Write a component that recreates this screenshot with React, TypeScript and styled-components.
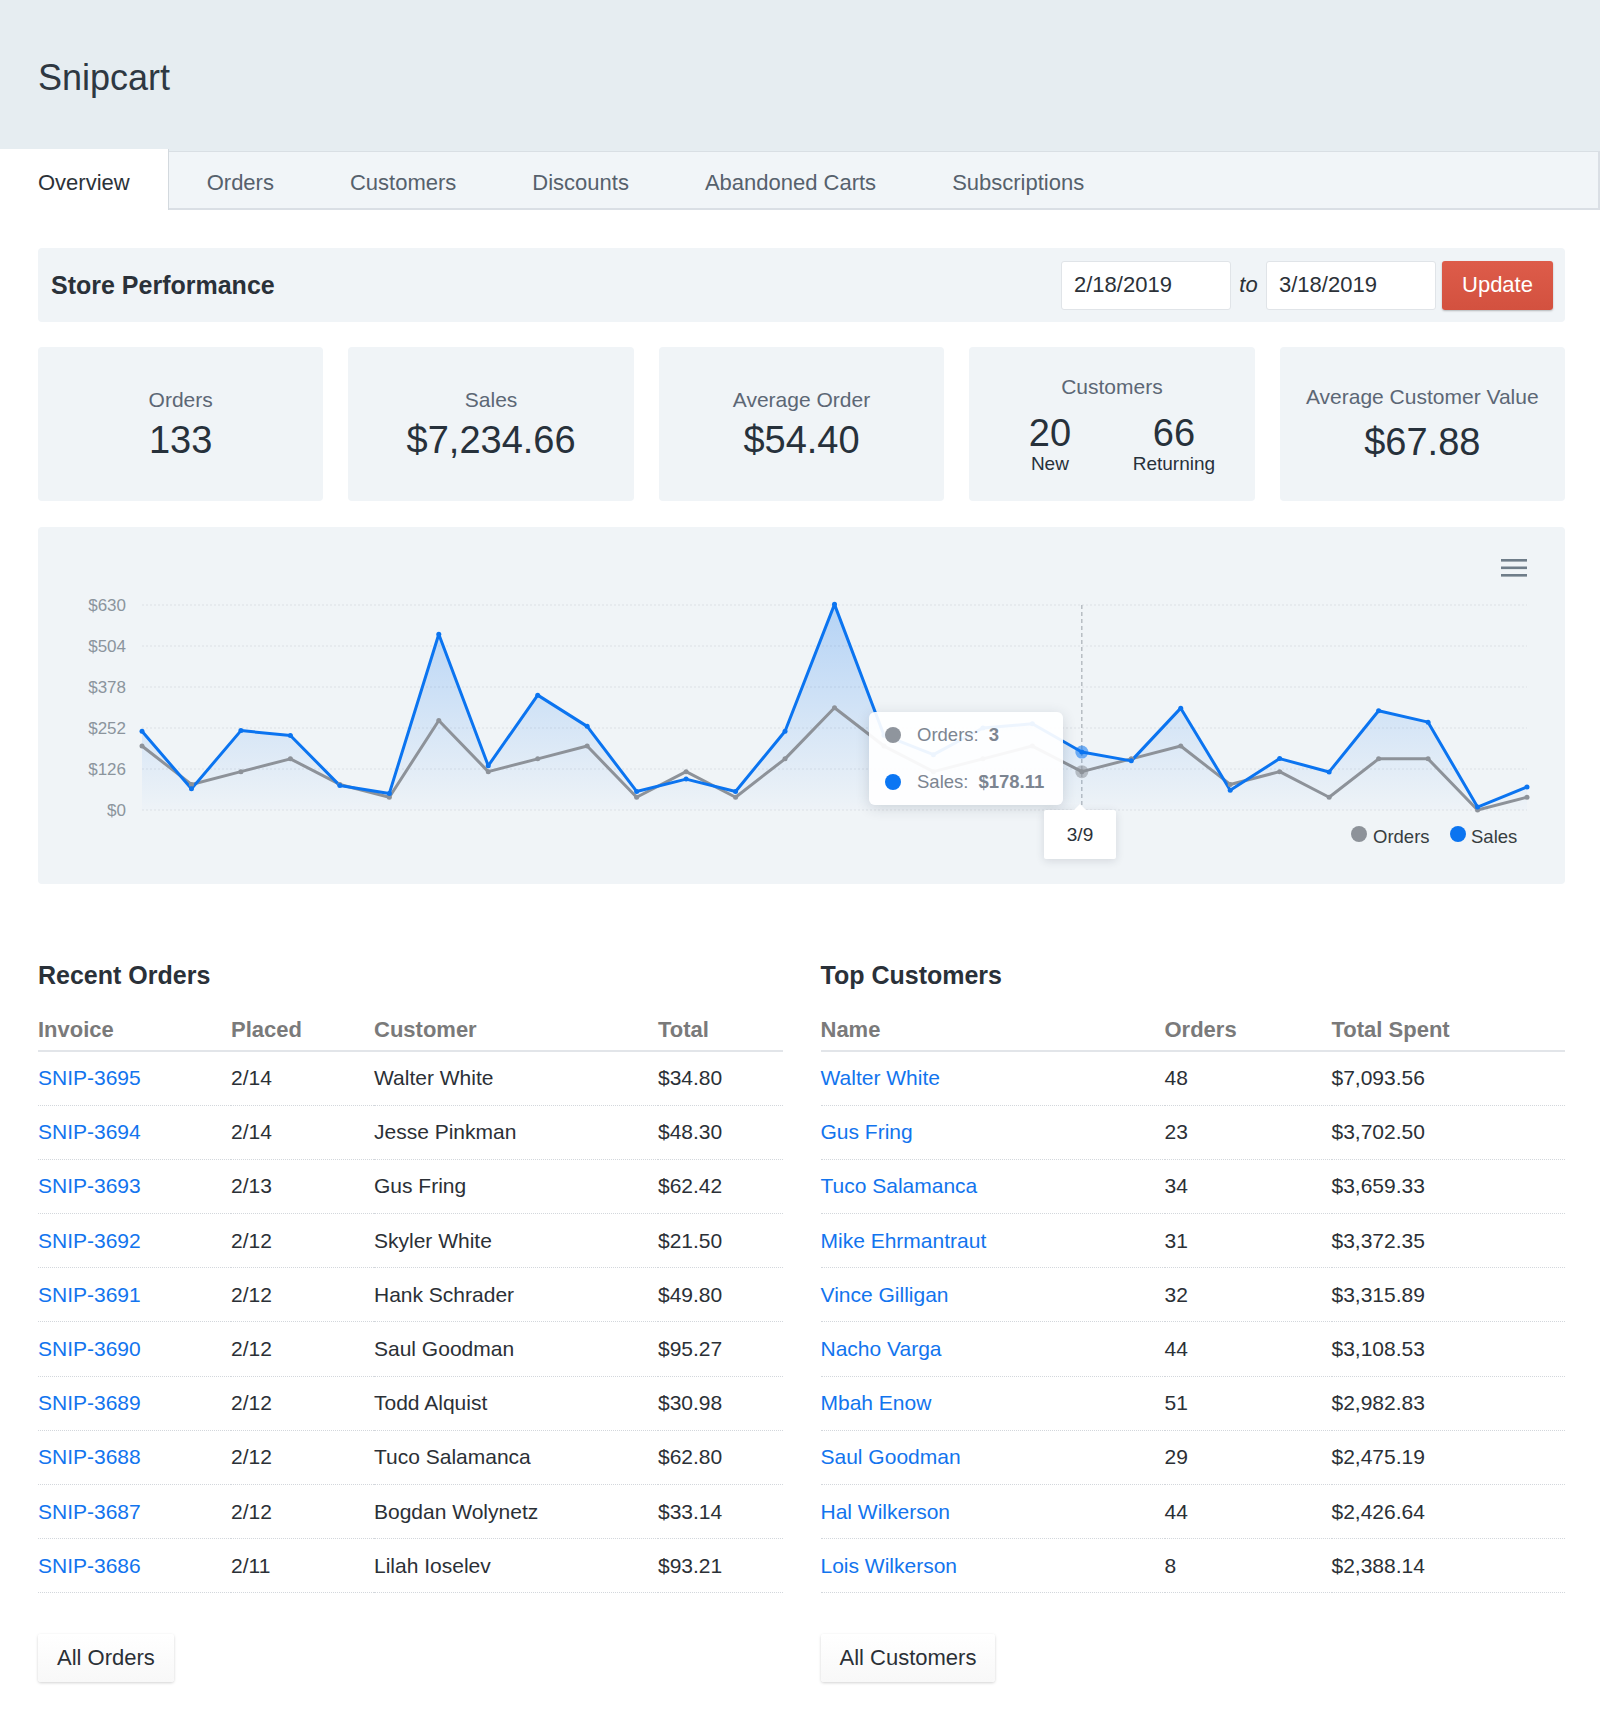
import React from 'react';
import styled, { createGlobalStyle } from 'styled-components';

const GlobalStyle = createGlobalStyle`
  * { box-sizing: border-box; }
  html, body { margin: 0; padding: 0; background: #ffffff; }
  body {
    font-family: 'Liberation Sans', Arial, sans-serif;
    color: #2b3138;
  }
`;

const BLUE = '#0b74f0';
const GREY = '#8d9299';

const tabs = ['Overview', 'Orders', 'Customers', 'Discounts', 'Abandoned Carts', 'Subscriptions'];

const sales = [242, 65, 244, 229, 75, 51, 540, 136, 353, 257, 57, 95, 57, 242, 632, 230, 170, 252, 265, 178.11, 151, 313, 61, 158, 117, 305, 270, 9, 71];
const orders = [5, 2, 3, 4, 2, 1, 7, 3, 4, 5, 1, 3, 1, 4, 8, 5, 3, 4, 5, 3, 4, 5, 2, 3, 1, 4, 4, 0, 1];
const HOVER = 19;

const recentOrders = [
  ['SNIP-3695', '2/14', 'Walter White', '$34.80'],
  ['SNIP-3694', '2/14', 'Jesse Pinkman', '$48.30'],
  ['SNIP-3693', '2/13', 'Gus Fring', '$62.42'],
  ['SNIP-3692', '2/12', 'Skyler White', '$21.50'],
  ['SNIP-3691', '2/12', 'Hank Schrader', '$49.80'],
  ['SNIP-3690', '2/12', 'Saul Goodman', '$95.27'],
  ['SNIP-3689', '2/12', 'Todd Alquist', '$30.98'],
  ['SNIP-3688', '2/12', 'Tuco Salamanca', '$62.80'],
  ['SNIP-3687', '2/12', 'Bogdan Wolynetz', '$33.14'],
  ['SNIP-3686', '2/11', 'Lilah Ioselev', '$93.21'],
];

const topCustomers = [
  ['Walter White', '48', '$7,093.56'],
  ['Gus Fring', '23', '$3,702.50'],
  ['Tuco Salamanca', '34', '$3,659.33'],
  ['Mike Ehrmantraut', '31', '$3,372.35'],
  ['Vince Gilligan', '32', '$3,315.89'],
  ['Nacho Varga', '44', '$3,108.53'],
  ['Mbah Enow', '51', '$2,982.83'],
  ['Saul Goodman', '29', '$2,475.19'],
  ['Hal Wilkerson', '44', '$2,426.64'],
  ['Lois Wilkerson', '8', '$2,388.14'],
];

const Page = styled.div`
  width: 1600px;
`;

const Header = styled.header`
  height: 151px;
  background: #e6edf1;
  display: flex;
  align-items: center;
  padding: 4px 0 0 38px;
`;

const Brand = styled.h1`
  margin: 0;
  font-size: 36px;
  font-weight: 400;
  color: #2e3842;
`;

const TabBar = styled.nav`
  display: flex;
  height: 59px;
  background: #f1f5f8;
  border-top: 1px solid #d9dfe4;
  border-bottom: 2px solid #dadfe5;
  border-right: 2px solid #dadfe5;
`;

const Tab = styled.a<{ $active?: boolean }>`
  display: flex;
  align-items: center;
  padding: 6px 38px 0;
  font-size: 22px;
  text-decoration: none;
  color: ${(p) => (p.$active ? '#2c3238' : '#56616c')};
  background: ${(p) => (p.$active ? '#ffffff' : 'transparent')};
  border-right: ${(p) => (p.$active ? '1px solid #d3d9de' : 'none')};
  margin: ${(p) => (p.$active ? '-3px 0 -2px 0' : '0')};
`;

const Main = styled.main`
  padding: 38px 35px 37px 38px;
`;

const PerfBar = styled.section`
  display: flex;
  align-items: center;
  justify-content: space-between;
  height: 74px;
  background: #f0f4f7;
  border-radius: 4px;
  padding: 0 12px 0 13px;
`;

const PerfTitle = styled.h2`
  margin: 0;
  font-size: 25px;
  font-weight: 700;
  color: #2a3139;
`;

const DateRange = styled.div`
  display: flex;
  align-items: center;
`;

const DateInput = styled.input`
  width: 170px;
  height: 49px;
  border: 1px solid #e0e4e8;
  border-radius: 3px;
  background: #ffffff;
  padding: 0 12px;
  font-family: inherit;
  font-size: 22px;
  color: #2b3138;
  outline: none;
`;

const To = styled.span`
  width: 35px;
  text-align: center;
  font-size: 22px;
  font-style: italic;
  color: #2b3138;
`;

const UpdateButton = styled.button`
  margin-left: 6px;
  width: 111px;
  height: 49px;
  border: none;
  border-radius: 3px;
  background: linear-gradient(#dd5c4a, #d3513f);
  box-shadow: 0 1px 2px rgba(0, 0, 0, 0.25);
  color: #ffffff;
  font-family: inherit;
  font-size: 22px;
`;

const StatGrid = styled.section`
  margin-top: 25px;
  display: grid;
  grid-template-columns: repeat(5, 1fr);
  gap: 25px;
`;

const StatCard = styled.div<{ $gap?: number }>`
  height: 154px;
  background: #f0f4f7;
  border-radius: 4px;
  display: flex;
  flex-direction: column;
  align-items: center;
  justify-content: center;
  gap: ${(p) => p.$gap ?? 5}px;
`;

const StatLabel = styled.div`
  font-size: 21px;
  line-height: 26px;
  color: #5c6775;
`;

const StatValue = styled.div`
  font-size: 38px;
  line-height: 44px;
  color: #27313b;
`;

const SplitStats = styled.div`
  display: grid;
  grid-template-columns: 124px 124px;
  text-align: center;
`;

const SplitValue = styled.div`
  font-size: 38px;
  line-height: 40px;
  color: #27313b;
`;

const SplitLabel = styled.div`
  font-size: 19px;
  line-height: 22px;
  color: #27313b;
`;

const ChartPanel = styled.section`
  position: relative;
  margin-top: 26px;
  height: 357px;
  background: #f0f4f7;
  border-radius: 4px;
`;

const ChartSvg = styled.svg`
  display: block;
  font-family: 'Liberation Sans', Arial, sans-serif;
`;

const Tooltip = styled.div`
  position: absolute;
  left: 831px;
  top: 185px;
  width: 194px;
  height: 93px;
  border-radius: 6px;
  background: rgba(255, 255, 255, 0.93);
  box-shadow: 0 3px 14px rgba(40, 50, 70, 0.16);
  display: flex;
  flex-direction: column;
  justify-content: center;
  gap: 25px;
  padding-left: 16px;
`;

const TipRow = styled.div`
  display: flex;
  align-items: center;
  font-size: 18.5px;
  line-height: 22px;
  color: #7c8591;
`;

const TipDot = styled.span<{ $color: string }>`
  width: 16px;
  height: 16px;
  border-radius: 50%;
  background: ${(p) => p.$color};
  margin-right: 16px;
`;

const TipValue = styled.b`
  margin-left: 10px;
  font-weight: 700;
`;

const XLabel = styled.div`
  position: absolute;
  left: 1006px;
  top: 283px;
  width: 72px;
  height: 49px;
  background: #ffffff;
  border-radius: 2px;
  box-shadow: 0 2px 8px rgba(40, 50, 70, 0.14);
  display: flex;
  align-items: center;
  justify-content: center;
  font-size: 19px;
  color: #2b3138;

  &::before {
    content: '';
    position: absolute;
    top: -6px;
    left: 30px;
    border-left: 6px solid transparent;
    border-right: 6px solid transparent;
    border-bottom: 6px solid #ffffff;
  }
`;

const Lists = styled.section`
  margin-top: 76px;
  display: grid;
  grid-template-columns: 1fr 1fr;
  column-gap: 38px;
`;

const ListTitle = styled.h2`
  margin: 0;
  font-size: 25px;
  line-height: 30px;
  font-weight: 700;
  color: #2a3139;
`;

const Table = styled.table`
  margin-top: 28px;
  width: 100%;
  border-collapse: collapse;
  table-layout: fixed;
`;

const Th = styled.th<{ $w?: number }>`
  width: ${(p) => (p.$w ? `${p.$w}px` : 'auto')};
  text-align: left;
  padding: 0 0 8px 0;
  font-size: 22px;
  line-height: 24px;
  font-weight: 700;
  color: #7a7a7a;
  border-bottom: 2px solid #e2e5e9;
`;

const Td = styled.td`
  height: 54.2px;
  padding: 0;
  font-size: 21px;
  line-height: 24px;
  color: #2b3036;
  border-bottom: 1px dotted #d3d7dc;
  white-space: nowrap;
`;

const Link = styled.a`
  color: #1274ee;
  text-decoration: none;
`;

const GhostButton = styled.button`
  margin-top: 41px;
  height: 48px;
  padding: 0 19px;
  border: none;
  border-radius: 3px;
  background: linear-gradient(#ffffff, #f8f8f8);
  box-shadow: 0 1px 3px rgba(0, 0, 0, 0.18);
  font-family: inherit;
  font-size: 22px;
  color: #2b3036;
`;

const X0 = 104;
const X1 = 1489;
const Y0 = 283;
const YTOP = 78;
const xAt = (i: number) => X0 + (i * (X1 - X0)) / 28;
const yAt = (v: number) => Y0 - (v / 630) * (Y0 - YTOP);
const ORDER_UNIT = 39.3;

const SalesChart = () => {
  const salesPts = sales.map((v, i) => `${xAt(i)},${yAt(v)}`).join(' ');
  const orderPts = orders.map((v, i) => `${xAt(i)},${yAt(v * ORDER_UNIT)}`).join(' ');
  const area = `M${salesPts.split(' ').join(' L')} L${xAt(28)},${Y0} L${xAt(0)},${Y0} Z`;
  const levels = [630, 504, 378, 252, 126, 0];

  return (
    <ChartPanel>
      <ChartSvg width="1527" height="357" viewBox="0 0 1527 357">
        <defs>
          <linearGradient id="salesFill" x1="0" y1="0" x2="0" y2="1">
            <stop offset="0%" stopColor={BLUE} stopOpacity="0.26" />
            <stop offset="100%" stopColor={BLUE} stopOpacity="0.01" />
          </linearGradient>
        </defs>

        <g fill="#6f7d89">
          <rect x="1463" y="32" width="26" height="2.6" />
          <rect x="1463" y="39.5" width="26" height="2.6" />
          <rect x="1463" y="47" width="26" height="2.6" />
        </g>

        {levels.map((l) => (
          <g key={l}>
            <line x1={X0} x2={X1} y1={yAt(l)} y2={yAt(l)} stroke="#dbe0e5" strokeWidth="1.2" strokeDasharray="2 2" />
            <text x="88" y={yAt(l) + 6} textAnchor="end" fontSize="17" fill="#8b949d">
              ${l}
            </text>
          </g>
        ))}

        <line x1={xAt(HOVER)} x2={xAt(HOVER)} y1={YTOP} y2={Y0} stroke="#a9afb5" strokeWidth="1.2" strokeDasharray="4 3" />

        <path d={area} fill="url(#salesFill)" />
        <polyline points={orderPts} fill="none" stroke={GREY} strokeWidth="3" strokeLinejoin="round" />
        <polyline points={salesPts} fill="none" stroke={BLUE} strokeWidth="3" strokeLinejoin="round" />

        {orders.map((v, i) => (
          <circle key={`o${i}`} cx={xAt(i)} cy={yAt(v * ORDER_UNIT)} r="2.5" fill={GREY} />
        ))}
        {sales.map((v, i) => (
          <circle key={`s${i}`} cx={xAt(i)} cy={yAt(v)} r="2.5" fill={BLUE} />
        ))}

        <circle cx={xAt(HOVER)} cy={yAt(orders[HOVER] * ORDER_UNIT)} r="6.5" fill={GREY} fillOpacity="0.55" />
        <circle cx={xAt(HOVER)} cy={yAt(sales[HOVER])} r="6.5" fill={BLUE} fillOpacity="0.55" />

        <circle cx="1321" cy="307" r="8" fill={GREY} />
        <text x="1335" y="316" fontSize="18.5" fill="#373d3f">Orders</text>
        <circle cx="1420" cy="307" r="8" fill={BLUE} />
        <text x="1433" y="316" fontSize="18.5" fill="#373d3f">Sales</text>
      </ChartSvg>

      <Tooltip>
        <TipRow>
          <TipDot $color="#8f959d" />
          Orders:
          <TipValue>3</TipValue>
        </TipRow>
        <TipRow>
          <TipDot $color="#0b76f3" />
          Sales:
          <TipValue>$178.11</TipValue>
        </TipRow>
      </Tooltip>
      <XLabel>3/9</XLabel>
    </ChartPanel>
  );
};

const App = () => (
  <Page>
    <GlobalStyle />
    <Header>
      <Brand>Snipcart</Brand>
    </Header>
    <TabBar>
      {tabs.map((t, i) => (
        <Tab key={t} $active={i === 0}>
          {t}
        </Tab>
      ))}
    </TabBar>

    <Main>
      <PerfBar>
        <PerfTitle>Store Performance</PerfTitle>
        <DateRange>
          <DateInput readOnly value="2/18/2019" />
          <To>to</To>
          <DateInput readOnly value="3/18/2019" />
          <UpdateButton>Update</UpdateButton>
        </DateRange>
      </PerfBar>

      <StatGrid>
        <StatCard>
          <StatLabel>Orders</StatLabel>
          <StatValue>133</StatValue>
        </StatCard>
        <StatCard>
          <StatLabel>Sales</StatLabel>
          <StatValue>$7,234.66</StatValue>
        </StatCard>
        <StatCard>
          <StatLabel>Average Order</StatLabel>
          <StatValue>$54.40</StatValue>
        </StatCard>
        <StatCard $gap={13}>
          <StatLabel>Customers</StatLabel>
          <SplitStats>
            <div>
              <SplitValue>20</SplitValue>
              <SplitLabel>New</SplitLabel>
            </div>
            <div>
              <SplitValue>66</SplitValue>
              <SplitLabel>Returning</SplitLabel>
            </div>
          </SplitStats>
        </StatCard>
        <StatCard $gap={10}>
          <StatLabel>Average Customer Value</StatLabel>
          <StatValue>$67.88</StatValue>
        </StatCard>
      </StatGrid>

      <SalesChart />

      <Lists>
        <div>
          <ListTitle>Recent Orders</ListTitle>
          <Table>
            <thead>
              <tr>
                <Th $w={193}>Invoice</Th>
                <Th $w={143}>Placed</Th>
                <Th $w={284}>Customer</Th>
                <Th>Total</Th>
              </tr>
            </thead>
            <tbody>
              {recentOrders.map(([inv, placed, name, total]) => (
                <tr key={inv}>
                  <Td>
                    <Link>{inv}</Link>
                  </Td>
                  <Td>{placed}</Td>
                  <Td>{name}</Td>
                  <Td>{total}</Td>
                </tr>
              ))}
            </tbody>
          </Table>
          <GhostButton>All Orders</GhostButton>
        </div>

        <div>
          <ListTitle>Top Customers</ListTitle>
          <Table>
            <thead>
              <tr>
                <Th $w={344}>Name</Th>
                <Th $w={167}>Orders</Th>
                <Th>Total Spent</Th>
              </tr>
            </thead>
            <tbody>
              {topCustomers.map(([name, count, spent]) => (
                <tr key={name}>
                  <Td>
                    <Link>{name}</Link>
                  </Td>
                  <Td>{count}</Td>
                  <Td>{spent}</Td>
                </tr>
              ))}
            </tbody>
          </Table>
          <GhostButton>All Customers</GhostButton>
        </div>
      </Lists>
    </Main>
  </Page>
);

export default App;
